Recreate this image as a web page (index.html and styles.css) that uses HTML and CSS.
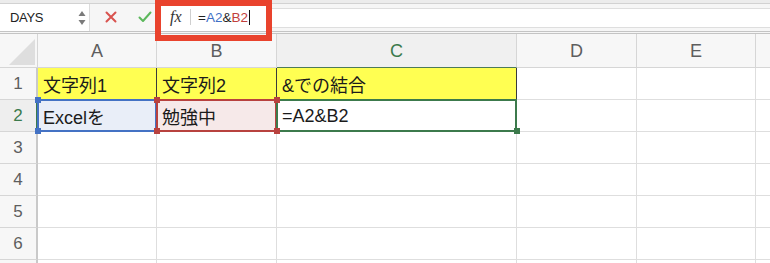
FILE: index.html
```html
<!DOCTYPE html>
<html lang="ja">
<head>
<meta charset="utf-8">
<link rel="stylesheet" href="styles.css">
</head>
<body>
<div class="page">
  <div class="toolbar">
    <div class="namebox">
      <span class="name">DAYS</span>
      <svg class="spin" width="8" height="16" viewBox="0 0 8 16"><polygon points="4,1 7.5,6 0.5,6" fill="#7a7a7a"/><polygon points="0.5,10 7.5,10 4,15" fill="#7a7a7a"/></svg>
    </div>
    <div class="btns">
      <svg width="12" height="12" viewBox="0 0 12 12"><path d="M1.5 1.5 L10.5 10.5 M10.5 1.5 L1.5 10.5" stroke="#d9534f" stroke-width="2" stroke-linecap="round"/></svg>
      <svg width="14" height="12" viewBox="0 0 14 12"><path d="M1.5 6.5 L5 10 L12.5 1.5" stroke="#5cb85c" stroke-width="2" fill="none" stroke-linecap="round" stroke-linejoin="round"/></svg>
    </div>
    <div class="formula">
      <div class="fcell">
        <span class="fx">fx</span>
        <span class="sep"></span>
        <span class="ftext">=<span class="ref-a">A2</span>&amp;<span class="ref-b">B2</span><span class="caret"></span></span>
      </div>
      <div class="frest"></div>
    </div>
  </div>
  <div class="annot"></div>

  <div class="sheet">
    <div class="hd corner"><svg width="38" height="34" viewBox="0 0 38 34"><polygon points="35,5 35,31 9,31" fill="#dedede"/></svg></div>
    <div class="hd col">A</div>
    <div class="hd col">B</div>
    <div class="hd col sel">C</div>
    <div class="hd col">D</div>
    <div class="hd col">E</div>
    <div class="hd col last"></div>

    <div class="hd row">1</div>
    <div class="cell yellow">文字列1</div>
    <div class="cell yellow">文字列2</div>
    <div class="cell yellow">&amp;での結合</div>
    <div class="cell"></div>
    <div class="cell"></div>
    <div class="cell last"></div>

    <div class="hd row rsel">2</div>
    <div class="cell rng blue">Excelを<i class="h tl"></i><i class="h bl"></i></div>
    <div class="cell rng red">勉強中<i class="h tl"></i><i class="h bl"></i><i class="h tr"></i><i class="h br"></i></div>
    <div class="cell rng green">=A2&amp;B2<i class="h br"></i></div>
    <div class="cell"></div>
    <div class="cell"></div>
    <div class="cell last"></div>

    <div class="hd row">3</div>
    <div class="cell"></div><div class="cell"></div><div class="cell"></div><div class="cell"></div><div class="cell"></div><div class="cell last"></div>
    <div class="hd row">4</div>
    <div class="cell"></div><div class="cell"></div><div class="cell"></div><div class="cell"></div><div class="cell"></div><div class="cell last"></div>
    <div class="hd row">5</div>
    <div class="cell"></div><div class="cell"></div><div class="cell"></div><div class="cell"></div><div class="cell"></div><div class="cell last"></div>
    <div class="hd row">6</div>
    <div class="cell"></div><div class="cell"></div><div class="cell"></div><div class="cell"></div><div class="cell"></div><div class="cell last"></div>
    <div class="hd row"></div>
    <div class="cell"></div><div class="cell"></div><div class="cell"></div><div class="cell"></div><div class="cell"></div><div class="cell last"></div>
  </div>
</div>
</body>
</html>
```
FILE: styles.css
```css
* { box-sizing: border-box; }
html, body { margin: 0; padding: 0; background: #ffffff; overflow: hidden; }
body { font-family: "Liberation Sans", "Noto Sans CJK JP", sans-serif; color: #1b1b1b; }
.page { position: relative; width: 770px; height: 263px; overflow: hidden; }

.toolbar {
  display: flex;
  height: 34px;
  background: #f6f6f6;
  border-top: 3px solid #ececec;
  border-bottom: 3px double #c4c4c4;
  box-shadow: inset 0 1px 0 #d2d2d2;
}
.namebox {
  width: 90px;
  margin-top: 1px;
  background: #ffffff;
  border-right: 1px solid #dcdcdc;
  display: flex;
  align-items: center;
  justify-content: space-between;
  padding: 0 3px 0 10px;
}
.name { font-size: 13px; color: #222; letter-spacing: -0.3px; }
.spin { display: block; }
.btns {
  width: 65px;
  display: flex;
  align-items: center;
  gap: 21px;
  padding-left: 15px;
}
.btns svg { display: block; }
.formula { flex: 1; display: flex; }
.fcell {
  width: 117px;
  background: #ffffff;
  display: flex;
  align-items: center;
  padding-left: 15px;
}
.fx { font-family: "Liberation Serif", "DejaVu Serif", serif; font-style: italic; font-size: 16px; color: #333; width: 20px; }
.sep { width: 1px; height: 16px; background: #cfcfcf; margin-right: 7px; }
.ftext { font-size: 13.5px; color: #1e1e1e; display: flex; align-items: center; }
.ref-a { color: #3f6fc6; }
.ref-b { color: #c2403c; }
.caret { display: inline-block; width: 1px; height: 15px; background: #111; margin-left: 1px; }
.frest {
  flex: 1;
  margin: 5px 0 3px;
  background: #ffffff;
  border-top: 1px solid #dedede;
  border-bottom: 1px solid #dedede;
}
.annot {
  position: absolute;
  left: 155px;
  top: 0;
  width: 117px;
  height: 41px;
  border: 6px solid #e9432d;
  pointer-events: none;
  z-index: 5;
}

.sheet {
  display: grid;
  grid-template-columns: 38px 119px 120px 240px 120px 119px 14px;
  grid-template-rows: 34px repeat(7, 32px);
}
.hd {
  background: #f7f7f7;
  color: #5e5e5e;
  border-right: 1px solid #d6d6d6;
  border-bottom: 1px solid #d6d6d6;
  display: flex;
  align-items: center;
  justify-content: center;
  font-size: 18px;
}
.corner { padding: 0; display: block; }
.corner svg { display: block; }
.col { padding-top: 1px; }
.col.sel { color: #3b7a4c; background: #f0f0f0; border-bottom: 1px solid #4d7a58; }
.col.last { border-right: none; }
.row { font-size: 17px; border-right: 2px solid #c9c9c9; }
.row.rsel { color: #3b7a4c; background: #eeeeee; border-right: 2px solid #3b7a4c; }
.cell {
  position: relative;
  border-right: 1px solid #dedede;
  border-bottom: 1px solid #dedede;
  font-size: 18px;
  display: flex;
  align-items: center;
  padding: 1px 0 0 5px;
  white-space: nowrap;
}
.cell.last { border-right: none; }
.yellow { background: #ffff52; border-right: 1px solid #3a3a3a; border-bottom-color: #c8c8a0; }
.rng::after {
  content: "";
  position: absolute;
  left: -1px; top: -1px; right: -1px; bottom: -1px;
  border: 2px solid var(--c);
  pointer-events: none;
}
.blue { --c: #4472c4; background: #e9eef8; }
.red { --c: #b8423f; background: #f6e9e9; }
.green { --c: #3c7a4c; background: #ffffff; }
.h {
  position: absolute;
  width: 6px; height: 6px;
  background: var(--c);
  z-index: 2;
}
.h.tl { left: -3px; top: -3px; }
.h.bl { left: -3px; bottom: -3px; }
.h.tr { right: -4px; top: -3px; }
.h.br { right: -4px; bottom: -3px; }
```
